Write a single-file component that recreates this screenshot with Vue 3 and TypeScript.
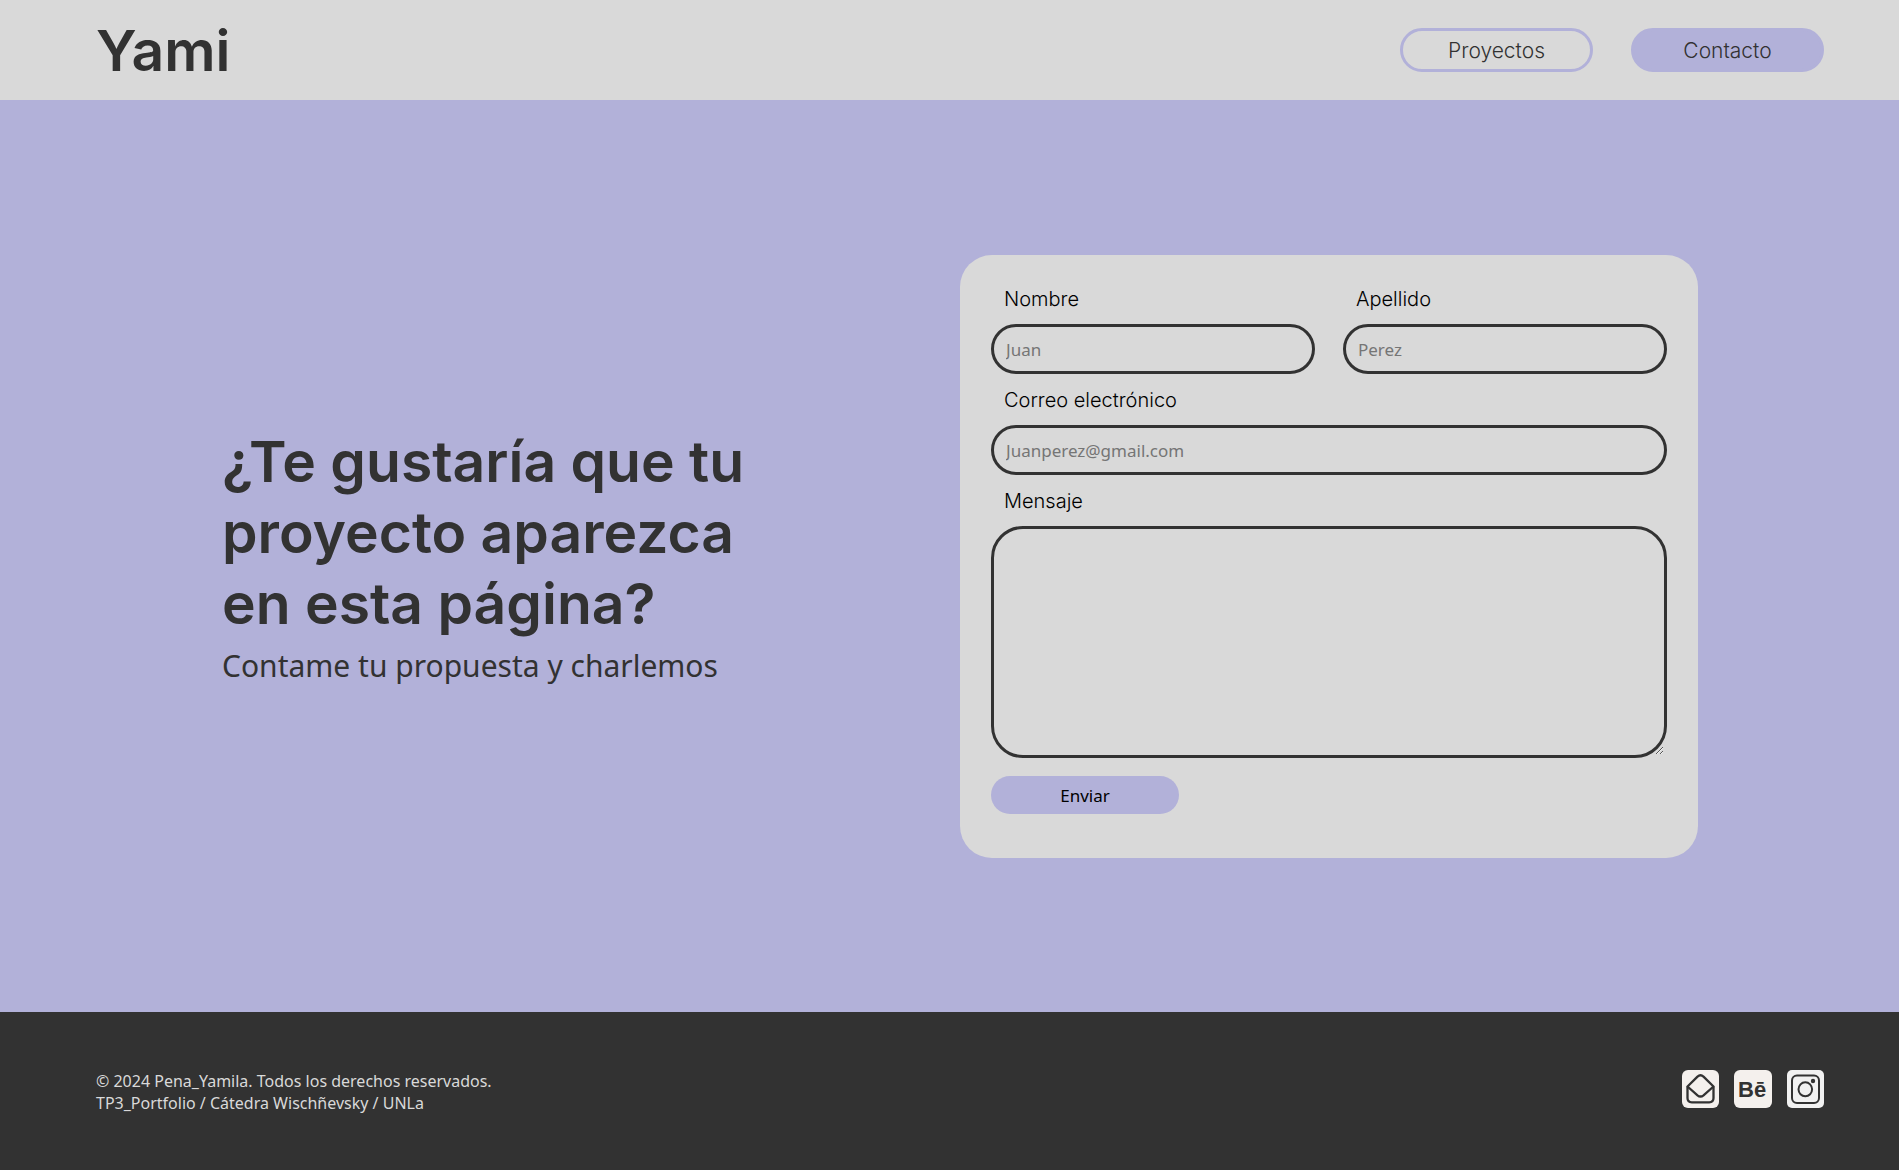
<script setup lang="ts">
import { ref } from 'vue'

const nombre = ref<string>('')
const apellido = ref<string>('')
const correo = ref<string>('')
const mensaje = ref<string>('')
</script>

<template>
  <div class="page">
    <header class="header">
      <a class="logo" href="#">Yami</a>
      <nav class="nav">
        <a class="nav-link" href="#proyectos">Proyectos</a>
        <a class="nav-link nav-link--active" href="#contacto">Contacto</a>
      </nav>
    </header>

    <main class="main">
      <section class="intro">
        <h1 class="title">¿Te gustaría que tu<br />proyecto aparezca<br />en esta página?</h1>
        <p class="subtitle">Contame tu propuesta y charlemos</p>
      </section>

      <form class="card" @submit.prevent>
        <div class="row">
          <div class="field">
            <label for="nombre">Nombre</label>
            <input id="nombre" v-model="nombre" type="text" placeholder="Juan" />
          </div>
          <div class="field">
            <label for="apellido">Apellido</label>
            <input id="apellido" v-model="apellido" type="text" placeholder="Perez" />
          </div>
        </div>
        <div class="field">
          <label for="correo">Correo electrónico</label>
          <input id="correo" v-model="correo" type="email" placeholder="Juanperez@gmail.com" />
        </div>
        <div class="field">
          <label for="mensaje">Mensaje</label>
          <textarea id="mensaje" v-model="mensaje"></textarea>
        </div>
        <button class="submit" type="submit">Enviar</button>
      </form>
    </main>

    <footer class="footer">
      <p class="legal">
        © 2024 Pena_Yamila. Todos los derechos reservados.<br />
        TP3_Portfolio / Cátedra Wischñevsky / UNLa
      </p>
      <div class="social">
        <a href="#mail" aria-label="Correo">
          <svg viewBox="0 0 37 38" width="37" height="38">
            <rect width="37" height="38" rx="6" fill="#f4f0ed" />
            <g fill="none" stroke="#323232" stroke-width="2.3" stroke-linejoin="round">
              <path d="M5.5 16.5 15.5 6.6Q18.5 4 21.5 6.6L31.5 16.5 21.5 25.3Q18.5 27.8 15.5 25.3Z" />
              <path d="M5.5 16.5V28Q5.5 32.3 9.8 32.3H27.2Q31.5 32.3 31.5 28V16.5" />
            </g>
          </svg>
        </a>
        <a href="#behance" aria-label="Behance">
          <svg viewBox="0 0 38 38" width="38" height="38">
            <rect width="38" height="38" rx="6" fill="#f4f0ed" />
            <text class="behance" x="4" y="27">Bē</text>
          </svg>
        </a>
        <a href="#instagram" aria-label="Instagram">
          <svg viewBox="0 0 37 38" width="37" height="38">
            <rect width="37" height="38" rx="5" fill="#f1f1f1" />
            <g fill="none" stroke="#323232" stroke-width="2">
              <rect x="5" y="5.5" width="27" height="27.5" rx="5" />
              <ellipse cx="18.3" cy="19.3" rx="6.8" ry="7" />
            </g>
            <circle cx="26" cy="11" r="2.2" fill="#323232" />
          </svg>
        </a>
      </div>
    </footer>
  </div>
</template>

<style>
body {
  margin: 0;
}
</style>

<style scoped>
.page {
  display: flex;
  flex-direction: column;
  min-height: 100vh;
  background: #b2b1d9;
  color: #323232;
  font-family: 'Noto Sans', sans-serif;
}

.page *,
.page *::before {
  box-sizing: border-box;
}

.header {
  display: flex;
  align-items: center;
  justify-content: space-between;
  height: 100px;
  padding: 0 75px 0 96px;
  background: #d9d9d9;
}

.logo {
  padding-top: 2px;
  color: inherit;
  font: 600 57px/76px 'Inter', sans-serif;
  text-decoration: none;
}

.nav {
  display: flex;
  gap: 38px;
}

.nav-link {
  width: 193px;
  height: 44px;
  border: 3px solid #b2b1d9;
  border-radius: 22px;
  color: inherit;
  font: 300 21px/40px 'Inter', sans-serif;
  text-align: center;
  text-decoration: none;
}

.nav-link--active {
  background: #b2b1d9;
}

.main {
  display: flex;
  flex: 1;
  align-items: center;
  justify-content: space-between;
  gap: 40px;
  padding: 40px 201px 40px 222px;
}

.title {
  margin: 0;
  font: 600 57px/71px 'Inter', sans-serif;
}

.subtitle {
  margin: 6px 0 0;
  font-size: 30px;
  line-height: 41px;
}

.card {
  flex: 0 1 738px;
  padding: 30px 31px 44px;
  border-radius: 32px;
  background: #d9d9d9;
}

.row {
  display: grid;
  grid-template-columns: 1fr 1fr;
  gap: 28px;
}

.field {
  display: flex;
  flex-direction: column;
  margin-bottom: 12px;
}

.field label {
  height: 39px;
  padding-left: 13px;
  color: #000;
  font: 300 20px/28px 'Inter', sans-serif;
}

.field input,
.field textarea {
  width: 100%;
  border: 3px solid #323232;
  background: transparent;
  color: #323232;
  font: 17px/22px 'Noto Sans', sans-serif;
}

.field input {
  height: 50px;
  padding: 4px 12px 2px;
  border-radius: 25px;
}

.field textarea {
  display: block;
  height: 232px;
  padding: 12px;
  border-radius: 32px;
}

.field input::placeholder {
  color: #757575;
}

.submit {
  display: block;
  width: 188px;
  height: 38px;
  margin-top: 18px;
  padding: 2px 0 0;
  border: 0;
  border-radius: 19px;
  background: #b2b1d9;
  color: #000;
  font: 17px/22px 'Noto Sans', sans-serif;
}

.footer {
  display: flex;
  align-items: center;
  justify-content: space-between;
  height: 158px;
  padding: 0 75px 4px 96px;
  background: #323232;
}

.legal {
  margin: 0;
  padding-top: 6px;
  color: #d9d9d9;
  font-size: 16px;
  line-height: 22px;
}

.social {
  display: flex;
  gap: 15px;
}

.social svg {
  display: block;
}

.behance {
  fill: #323232;
  font: bold 22px 'Liberation Sans', sans-serif;
}
</style>
